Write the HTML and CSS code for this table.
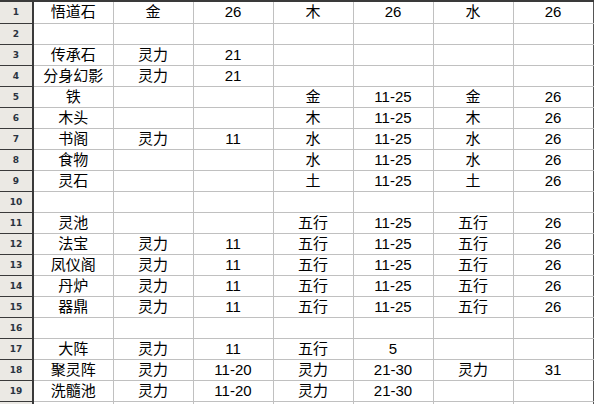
FILE: index.html
```html
<!DOCTYPE html>
<html>
<head>
<meta charset="utf-8">
<link rel="stylesheet" href="styles.css">
</head>
<body>
<table class="sheet">
<colgroup><col class="hc"><col class="c"><col class="c"><col class="c"><col class="c"><col class="c"><col class="c"><col class="c"></colgroup>
<tr class="first"><th>1</th><td>悟道石</td><td>金</td><td>26</td><td>木</td><td>26</td><td>水</td><td>26</td></tr>
<tr><th>2</th><td></td><td></td><td></td><td></td><td></td><td></td><td></td></tr>
<tr><th>3</th><td>传承石</td><td>灵力</td><td>21</td><td></td><td></td><td></td><td></td></tr>
<tr><th>4</th><td>分身幻影</td><td>灵力</td><td>21</td><td></td><td></td><td></td><td></td></tr>
<tr><th>5</th><td>铁</td><td></td><td></td><td>金</td><td>11-25</td><td>金</td><td>26</td></tr>
<tr><th>6</th><td>木头</td><td></td><td></td><td>木</td><td>11-25</td><td>木</td><td>26</td></tr>
<tr><th>7</th><td>书阁</td><td>灵力</td><td>11</td><td>水</td><td>11-25</td><td>水</td><td>26</td></tr>
<tr><th>8</th><td>食物</td><td></td><td></td><td>水</td><td>11-25</td><td>水</td><td>26</td></tr>
<tr><th>9</th><td>灵石</td><td></td><td></td><td>土</td><td>11-25</td><td>土</td><td>26</td></tr>
<tr><th>10</th><td></td><td></td><td></td><td></td><td></td><td></td><td></td></tr>
<tr><th>11</th><td>灵池</td><td></td><td></td><td>五行</td><td>11-25</td><td>五行</td><td>26</td></tr>
<tr><th>12</th><td>法宝</td><td>灵力</td><td>11</td><td>五行</td><td>11-25</td><td>五行</td><td>26</td></tr>
<tr><th>13</th><td>凤仪阁</td><td>灵力</td><td>11</td><td>五行</td><td>11-25</td><td>五行</td><td>26</td></tr>
<tr><th>14</th><td>丹炉</td><td>灵力</td><td>11</td><td>五行</td><td>11-25</td><td>五行</td><td>26</td></tr>
<tr><th>15</th><td>器鼎</td><td>灵力</td><td>11</td><td>五行</td><td>11-25</td><td>五行</td><td>26</td></tr>
<tr><th>16</th><td></td><td></td><td></td><td></td><td></td><td></td><td></td></tr>
<tr><th>17</th><td>大阵</td><td>灵力</td><td>11</td><td>五行</td><td>5</td><td></td><td></td></tr>
<tr><th>18</th><td>聚灵阵</td><td>灵力</td><td>11-20</td><td>灵力</td><td>21-30</td><td>灵力</td><td>31</td></tr>
<tr><th>19</th><td>洗髓池</td><td>灵力</td><td>11-20</td><td>灵力</td><td>21-30</td><td></td><td></td></tr>
<tr class="last"><th></th><td></td><td></td><td></td><td></td><td></td><td></td><td></td></tr>
</table>
</body>
</html>
```
FILE: styles.css
```css
html, body {
  margin: 0;
  padding: 0;
  background: #ffffff;
  overflow: hidden;
}
.sheet {
  border-collapse: collapse;
  table-layout: fixed;
  width: 593px;
  border-top: 2px solid #3a3a3a;
  font-family: "Liberation Sans", "Noto Sans CJK SC", sans-serif;
  font-size: 15px;
  color: #000;
}
.hc { width: 33px; }
.c { width: 80px; }
.sheet tr { height: 21px; }
.sheet tr.first { height: 22px; }
.sheet th {
  padding: 0;
  background: #ebe9e4;
  border-right: 2px solid #3a3a3a;
  border-bottom: 1px solid #3a3a3a;
  font-family: "DejaVu Sans", sans-serif;
  font-size: 9px;
  font-weight: bold;
  color: #2a3340;
  text-align: center;
  vertical-align: middle;
}
.sheet td {
  padding: 0;
  border-right: 1px solid #c0c0c0;
  border-bottom: 1px solid #c0c0c0;
  text-align: center;
  vertical-align: middle;
  line-height: 18px;
  white-space: nowrap;
  overflow: hidden;
}
.sheet td:last-child {
  border-right: 1px solid #555555;
}
```
